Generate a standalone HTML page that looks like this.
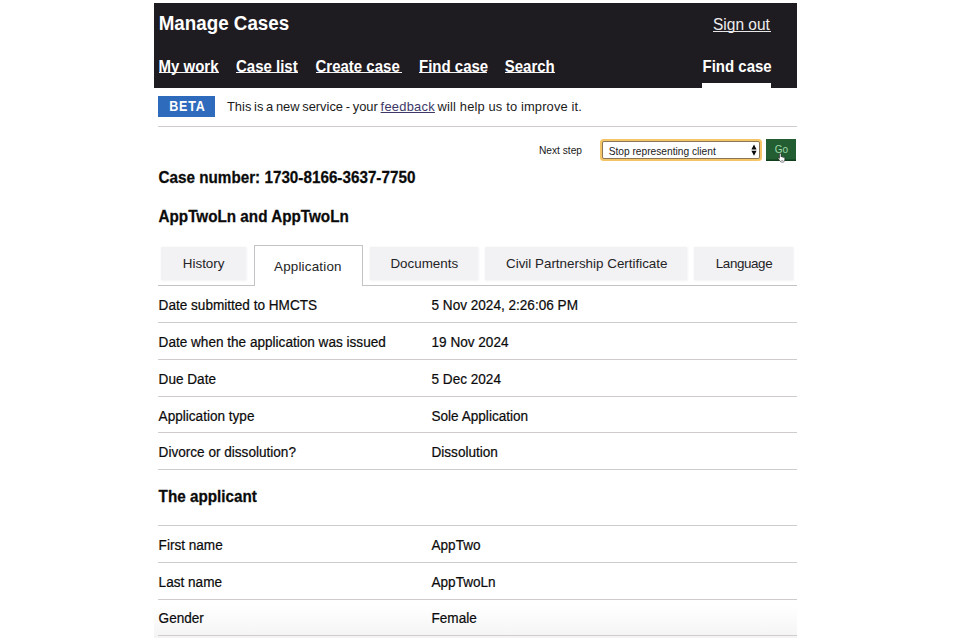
<!DOCTYPE html>
<html><head><meta charset="utf-8">
<style>
html,body{margin:0;padding:0;background:#fff;}
body{width:960px;height:640px;overflow:hidden;position:relative;font-family:"Liberation Sans",sans-serif;color:#0b0c0c;}
.a{position:absolute;white-space:nowrap;line-height:1;}
.hdr{position:absolute;left:154px;top:2.5px;width:643px;height:85px;background:#1f1c21;}
.notch{position:absolute;left:701.5px;top:82.5px;width:69.5px;height:5px;background:#fff;}
.w{color:#fff;}
.b{font-weight:bold;}
.u{text-decoration:underline;text-underline-offset:0.2px;text-decoration-thickness:1px;}
.sy{transform:scaleY(1.12);transform-origin:0 85%;}
.line{position:absolute;left:158px;width:639px;height:1px;background:#cfcbcf;}
.tab{position:absolute;background:#f2f1f4;top:247px;height:33px;box-shadow:0 0 2px 0.5px #f4f3f6;}
.hd{transform:scaleY(1.09);transform-origin:0 85%;-webkit-text-stroke:0.25px #0b0b0b;}
.lbl{font-size:13.58px;color:#0b0b0b;-webkit-text-stroke:0.2px #0b0b0b;transform:scaleY(1.1);transform-origin:0 85%;}
</style></head>
<body>
<div style="position:absolute;left:154px;top:606px;width:643px;height:32.4px;background:linear-gradient(#fff,#f4f4f5);"></div>
<div class="hdr"></div>
<div class="notch"></div>
<div class="a w b sy" style="left:158.7px;top:15px;font-size:18.8px;">Manage Cases</div>
<div class="a w sy" style="left:713px;top:16.5px;font-size:15.5px;color:#eee;">Sign out</div>
<div class="a w b sy" style="left:158.5px;top:58.6px;font-size:15px;">My work</div>
<div class="a w b sy" style="left:236px;top:58.6px;font-size:15px;">Case list</div>
<div class="a w b sy" style="left:315.5px;top:58.6px;font-size:15px;">Create case</div>
<div class="a w b sy" style="left:419px;top:58.6px;font-size:15px;">Find case</div>
<div class="a w b sy" style="left:504.7px;top:58.6px;font-size:15px;">Search</div>
<div style="position:absolute;left:158.5px;top:72.3px;width:60.5px;height:1.2px;background:#f4f4f4;"></div>
<div style="position:absolute;left:236px;top:72.3px;width:62.19999999999999px;height:1.2px;background:#f4f4f4;"></div>
<div style="position:absolute;left:315.5px;top:72.3px;width:86.5px;height:1.2px;background:#f4f4f4;"></div>
<div style="position:absolute;left:419px;top:72.3px;width:68.30000000000001px;height:1.2px;background:#f4f4f4;"></div>
<div style="position:absolute;left:504.7px;top:72.3px;width:50.80000000000001px;height:1.2px;background:#f4f4f4;"></div>
<div style="position:absolute;left:713px;top:31px;width:57.799999999999955px;height:1.2px;background:#e6e6e6;"></div>
<div class="a w b sy" style="left:702.5px;top:58.6px;font-size:15px;">Find case</div>

<div style="position:absolute;left:158.3px;top:96px;width:57px;height:20.8px;background:#2f6bbd;"></div>
<div class="a w b sy" style="left:169.3px;top:100.7px;font-size:12.5px;letter-spacing:0.8px;">BETA</div>
<div class="a" style="left:227px;top:100.6px;font-size:12.9px;color:#1b1b1b;word-spacing:-0.9px;">This is a new service - your</div>
<div class="a" style="left:380.6px;top:100.6px;font-size:12.9px;color:#3e3868;letter-spacing:0.25px;text-decoration:underline;text-underline-offset:0.5px;">feedback</div>
<div class="a" style="left:437.6px;top:100.6px;font-size:12.9px;color:#1b1b1b;letter-spacing:0.15px;">will help us to improve it.</div>
<div class="line" style="top:126px;"></div>

<div class="a" style="left:539px;top:146.1px;font-size:10.2px;color:#1a1a1a;">Next step</div>
<div style="position:absolute;left:599.8px;top:138.8px;width:161.8px;height:22.5px;box-sizing:border-box;border-radius:3.5px;background:#f4c566;"></div>
<div style="position:absolute;left:601.6px;top:140.7px;width:158.2px;height:18.8px;box-sizing:border-box;border:1px solid #8a7655;border-radius:2px;background:#fff;"></div>
<div class="a" style="left:608.7px;top:146.6px;font-size:10.2px;color:#1a1a1a;">Stop representing client</div>
<svg style="position:absolute;left:751px;top:144px;" width="6" height="12" viewBox="0 0 6 12"><path d="M3 0.6 L5.6 5.5 L0.4 5.5 Z M3 11.7 L5.6 6.7 L0.4 6.7 Z" fill="#0a0a0a"/></svg>
<div style="position:absolute;left:766px;top:139px;width:30px;height:22px;background:#235e33;box-shadow:inset 0 -1.5px 0 #103f1c;"></div>
<div class="a" style="left:774.8px;top:145px;font-size:10px;color:#9fd8a8;">Go</div>
<svg style="position:absolute;left:777px;top:153px;" width="10.7" height="9.9" viewBox="0 0 13 12"><path d="M3.0 1.3 C3.0 0.1 5.0 0.1 5.0 1.3 L5.0 4.8 C5.1 4.0 6.5 4.0 6.5 4.8 L6.5 5.2 C6.6 4.5 8.0 4.5 8.0 5.2 L8.0 5.5 C8.1 4.9 9.5 4.9 9.5 5.6 L9.5 8.0 C9.5 9.8 8.6 11.0 7.3 11.0 L5.6 11.0 C4.7 11.0 4.2 10.5 3.6 9.6 L1.5 6.8 C1.0 6.0 2.0 5.3 2.6 6.0 L3.0 6.5 Z" fill="#fff" stroke="#111" stroke-width="0.7"/><path d="M5.2 9.0 L7.7 9.0" stroke="#999" stroke-width="1.1"/></svg>

<div class="a b hd" style="left:158.5px;top:169.6px;font-size:15.25px;color:#0b0b0b;">Case number: 1730-8166-3637-7750</div>
<div class="a b hd" style="left:158.5px;top:208.7px;font-size:15.25px;color:#0b0b0b;">AppTwoLn and AppTwoLn</div>

<div class="tab" style="left:161px;width:85px;"></div>
<div class="tab" style="left:370px;width:108px;"></div>
<div class="tab" style="left:485px;width:202px;"></div>
<div class="tab" style="left:694px;width:99px;"></div>
<div style="position:absolute;left:253.5px;top:245px;width:109px;height:41px;box-sizing:border-box;border:1px solid #c4c2c6;border-bottom:none;background:#fff;"></div>
<div style="position:absolute;left:158px;top:285px;width:95.5px;height:1px;background:#c4c2c6;"></div>
<div style="position:absolute;left:362.5px;top:285px;width:434.5px;height:1px;background:#c4c2c6;"></div>
<div class="a" style="left:182.8px;top:256.7px;font-size:13.4px;color:#242426;">History</div>
<div class="a" style="left:274px;top:259.7px;font-size:13.4px;color:#242426;letter-spacing:0.2px;">Application</div>
<div class="a" style="left:390.4px;top:256.7px;font-size:13.4px;color:#242426;">Documents</div>
<div class="a" style="left:506px;top:256.7px;font-size:13.4px;color:#242426;">Civil Partnership Certificate</div>
<div class="a" style="left:715.8px;top:256.7px;font-size:13.4px;color:#242426;letter-spacing:-0.4px;">Language</div>

<div class="a lbl" style="left:158.6px;top:298.8px;">Date submitted to HMCTS</div>
<div class="a lbl" style="left:431.5px;top:298.8px;">5 Nov 2024, 2:26:06 PM</div>
<div class="line" style="top:322px;"></div>
<div class="a lbl" style="left:158.6px;top:335.9px;">Date when the application was issued</div>
<div class="a lbl" style="left:431.5px;top:335.9px;">19 Nov 2024</div>
<div class="line" style="top:359px;"></div>
<div class="a lbl" style="left:158.6px;top:372.7px;">Due Date</div>
<div class="a lbl" style="left:431.5px;top:372.7px;">5 Dec 2024</div>
<div class="line" style="top:396px;"></div>
<div class="a lbl" style="left:158.6px;top:409.6px;">Application type</div>
<div class="a lbl" style="left:431.5px;top:409.6px;">Sole Application</div>
<div class="line" style="top:432px;"></div>
<div class="a lbl" style="left:158.6px;top:446.4px;">Divorce or dissolution?</div>
<div class="a lbl" style="left:431.5px;top:446.4px;">Dissolution</div>
<div class="line" style="top:469px;"></div>
<div class="a b hd" style="left:158.6px;top:489.4px;font-size:15.25px;color:#0b0b0b;">The applicant</div>
<div class="line" style="top:525px;"></div>
<div class="a lbl" style="left:158.6px;top:538.9px;">First name</div>
<div class="a lbl" style="left:431.5px;top:538.9px;">AppTwo</div>
<div class="line" style="top:562px;"></div>
<div class="a lbl" style="left:158.6px;top:575.9px;">Last name</div>
<div class="a lbl" style="left:431.5px;top:575.9px;">AppTwoLn</div>
<div class="line" style="top:599px;"></div>
<div class="a lbl" style="left:158.6px;top:612.1px;">Gender</div>
<div class="a lbl" style="left:431.5px;top:612.1px;">Female</div>
<div class="line" style="top:635px;"></div>
</body></html>
